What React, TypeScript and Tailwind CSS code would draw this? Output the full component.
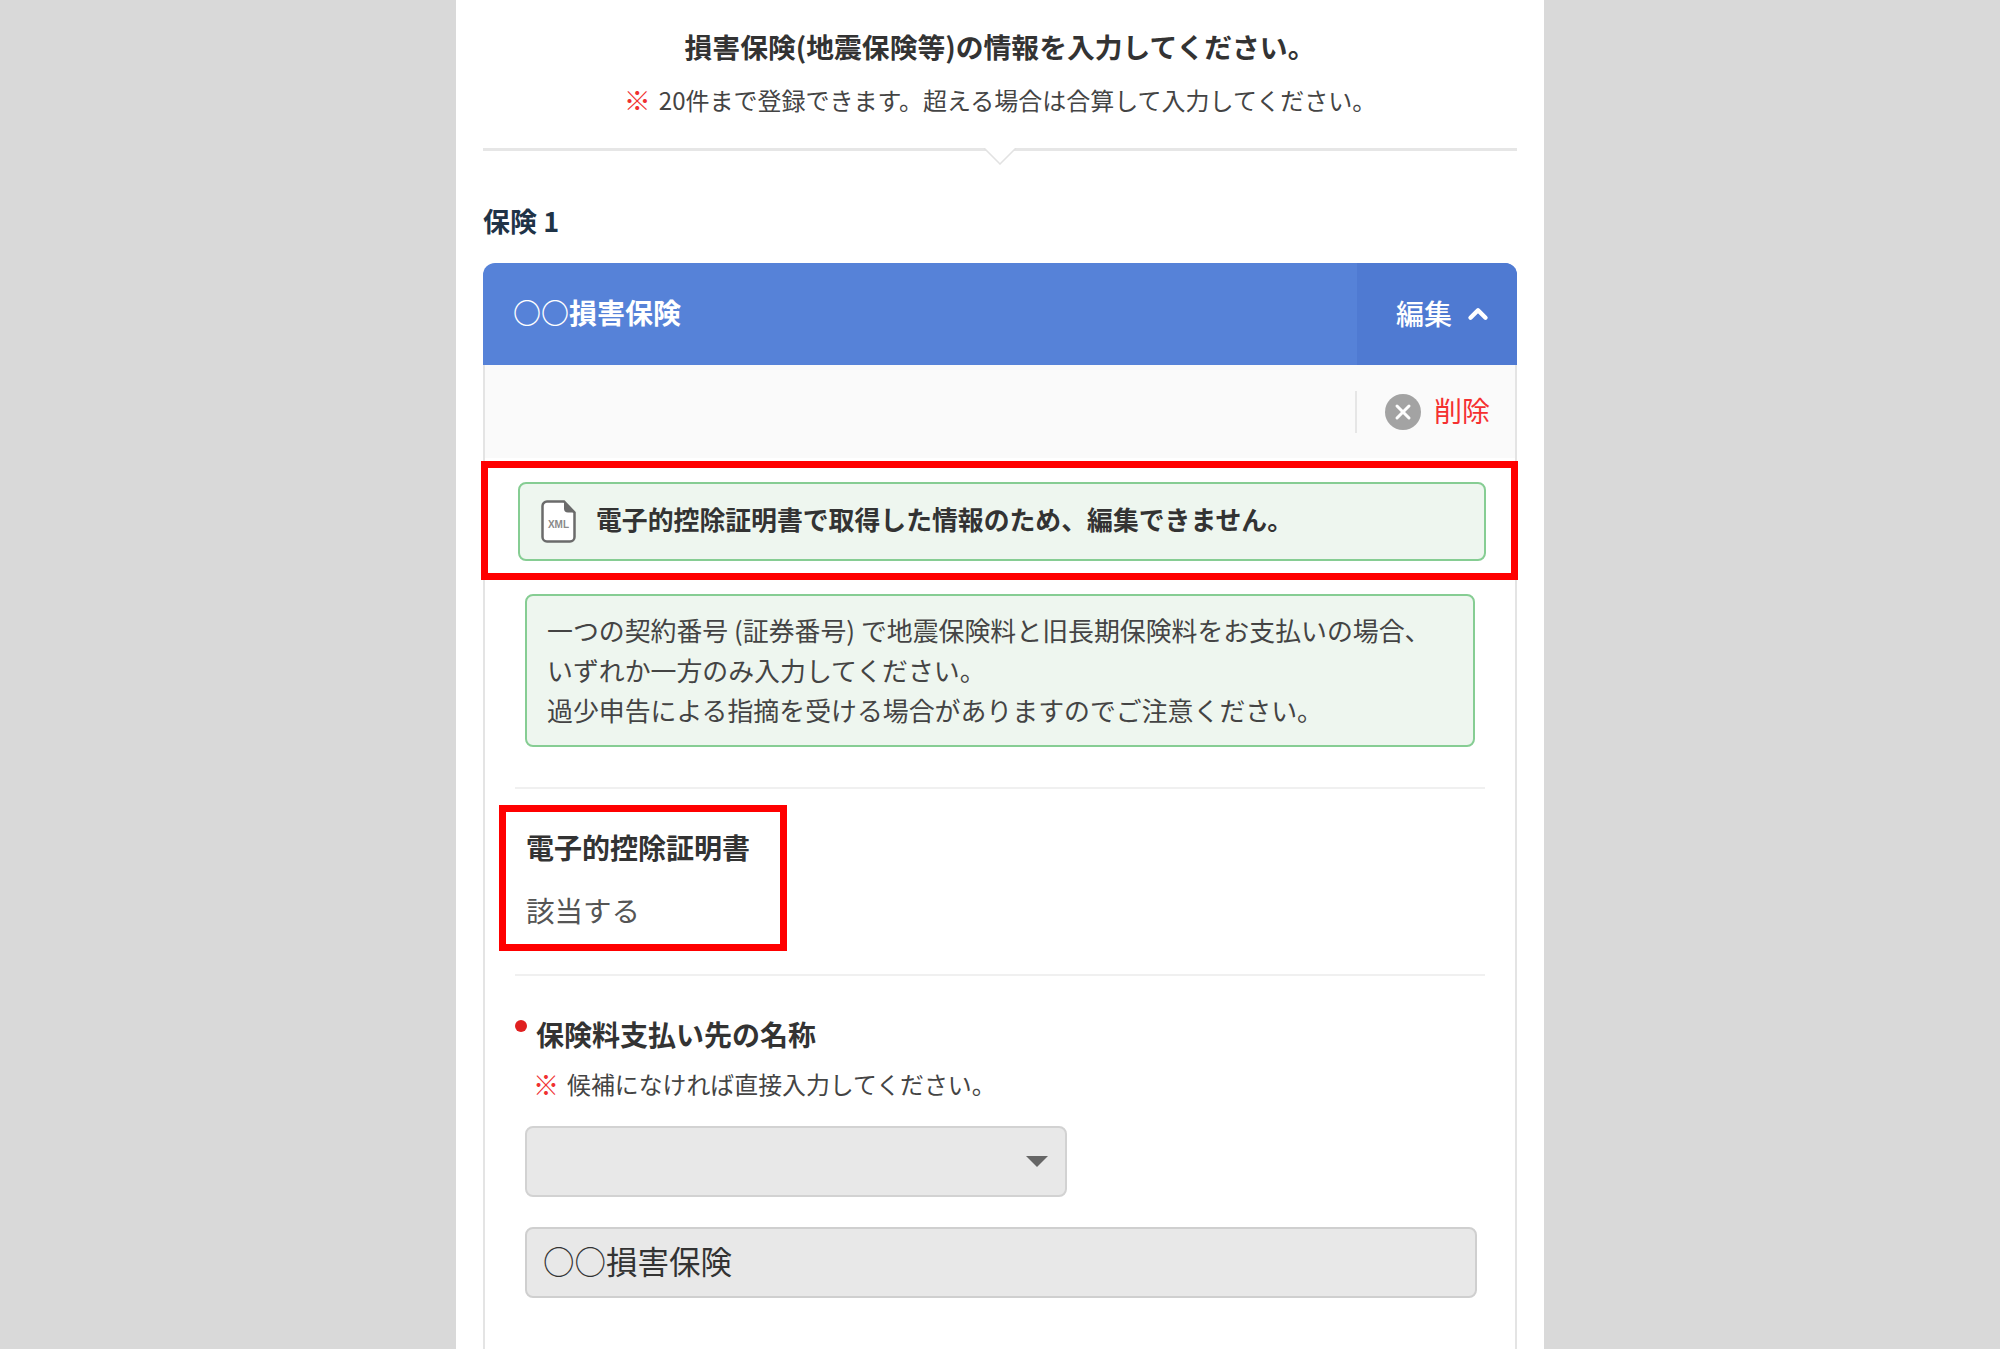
import React from 'react'
import { ChevronUp, X } from 'lucide-react'

// Small file icon with the XML tag, as in the locked notice
function XmlFileIcon() {
  return (
    <svg width="35" height="43" viewBox="0 0 35 43" className="shrink-0">
      <path d="M6 1.5h17l10.5 11V37a4.5 4.5 0 0 1-4.5 4.5H6A4.5 4.5 0 0 1 1.5 37V6A4.5 4.5 0 0 1 6 1.5z" fill="#fff" stroke="#6b6b6b" strokeWidth="2.5" />
      <path d="M23 1.5v7a4 4 0 0 0 4 4h6.5z" fill="#6b6b6b" />
      <text x="17.5" y="28" textAnchor="middle" fontSize="10" fontWeight="700" fill="#8a8a8a" fontFamily="Liberation Sans, sans-serif">XML</text>
    </svg>
  )
}

export default function App() {
  return (
    <div className="flex h-[1349px] justify-center overflow-hidden bg-[#d9d9d9] font-['Noto_Sans_CJK_JP','Liberation_Sans',sans-serif] text-[#333]">
      <div className="flex w-[1088px] flex-col bg-white px-[27px]">
        <h1 className="mt-[26px] text-center text-[27.8px] leading-[40px] font-bold">
          損害保険(地震保険等)の情報を入力してください。
        </h1>
        <p className="mt-[18px] flex h-[32px] items-center justify-center gap-[8px] text-[24px] leading-[32px] text-[#444]">
          <span className="text-[27px] font-bold text-[#f03030]">※</span>
          <span>20件まで登録できます。超える場合は合算して入力してください。</span>
        </p>

        <div className="relative mt-[32px] h-[3px] shrink-0 bg-[#e6e6e6]">
          <svg width="34" height="17" viewBox="0 0 34 17" className="absolute top-0 left-1/2 -translate-x-1/2">
            <path d="M1 0l16 16L33 0" fill="#fff" stroke="#e2e2e2" strokeWidth="1.5" />
          </svg>
        </div>

        <h2 className="mt-[54px] text-[27px] leading-[32px] font-bold text-[#1f3347]">保険 1</h2>

        <div className="mt-[26px] flex flex-1 flex-col">
          <div className="flex h-[102px] shrink-0 overflow-hidden rounded-t-[12px] bg-[#5682d8] text-[28px] text-white">
            <div className="flex flex-1 items-center pb-[5px] pl-[30px] font-bold">○○損害保険</div>
            <div className="flex w-[160px] items-center justify-end gap-[11px] bg-[#4f7ad2] pr-[24px] font-medium">
              <span className="pb-[3px]">編集</span>
              <ChevronUp size={30} strokeWidth={3.5} />
            </div>
          </div>

          <div className="flex flex-1 flex-col border-x-2 border-[#e4e4e4]">
            <div className="flex h-[93px] shrink-0 items-center justify-end bg-[#fafafa] pr-[25px]">
              <div className="flex h-[42px] items-center gap-[13px] border-l-2 border-[#e6e6e6] pl-[28px]">
                <span className="flex h-[36px] w-[36px] items-center justify-center rounded-full bg-[#a3a3a3] text-white">
                  <X size={24} strokeWidth={3} />
                </span>
                <span className="pb-[4px] text-[28px] text-[#f53030]">削除</span>
              </div>
            </div>

            <div className="mt-[3px] -mr-[3px] -ml-[4px] h-[119px] shrink-0 border-[7px] border-[#ff0000] pt-[14px] pr-[25px] pl-[30px]">
              <div className="flex h-[79px] items-center gap-[20px] rounded-[8px] border-2 border-[#86cd93] bg-[#eef6ef] pl-[21px] text-[25.85px] font-bold">
                <XmlFileIcon />
                <span className="pb-[4px]">電子的控除証明書で取得した情報のため、編集できません。</span>
              </div>
            </div>

            <div className="mt-[14px] mr-[40px] ml-[40px] flex h-[153px] shrink-0 flex-col justify-center rounded-[8px] border-2 border-[#86cd93] bg-[#eef6ef] pb-[2px] pl-[20px] text-[25.9px] leading-[40px] text-[#444]">
              <p>一つの契約番号 (証券番号) で地震保険料と旧長期保険料をお支払いの場合、</p>
              <p>いずれか一方のみ入力してください。</p>
              <p>過少申告による指摘を受ける場合がありますのでご注意ください。</p>
            </div>

            <div className="mx-[30px] mt-[40px] h-[2px] shrink-0 bg-[#f0f0f0]" />

            <div className="mt-[16px] ml-[14px] h-[146px] w-[288px] shrink-0 border-[7px] border-[#ff0000] pt-[17px] pl-[20px]">
              <p className="text-[28px] leading-[36px] font-bold">電子的控除証明書</p>
              <p className="mt-[27px] text-[28.5px] leading-[36px] text-[#555]">該当する</p>
            </div>

            <div className="mx-[30px] mt-[23px] h-[2px] shrink-0 bg-[#f0f0f0]" />

            <div className="mt-[40px] ml-[30px] flex h-[36px] shrink-0 items-start gap-[9px]">
              <span className="mt-[4px] h-[12px] w-[12px] rounded-full bg-[#e02020]" />
              <span className="text-[28px] leading-[36px] font-bold">保険料支払い先の名称</span>
            </div>
            <p className="mt-[16px] ml-[48px] flex h-[32px] items-center gap-[8px] text-[23.9px] leading-[32px] text-[#444]">
              <span className="text-[26px] font-bold text-[#f03030]">※</span>
              <span>候補になければ直接入力してください。</span>
            </p>

            <div className="mt-[26px] ml-[40px] flex h-[71px] w-[542px] shrink-0 items-center justify-end rounded-[8px] border-2 border-[#d2d2d2] bg-[#e8e8e8] pr-[17px]">
              <span className="h-0 w-0 border-x-[11px] border-t-[11px] border-x-transparent border-t-[#666]" />
            </div>

            <div className="mt-[30px] mr-[38px] ml-[40px] flex h-[71px] shrink-0 items-center rounded-[8px] border-2 border-[#cfcfcf] bg-[#e8e8e8] pb-[4px] pl-[16px] text-[31.5px] text-[#333]">
              ○○損害保険
            </div>
          </div>
        </div>
      </div>
    </div>
  )
}
